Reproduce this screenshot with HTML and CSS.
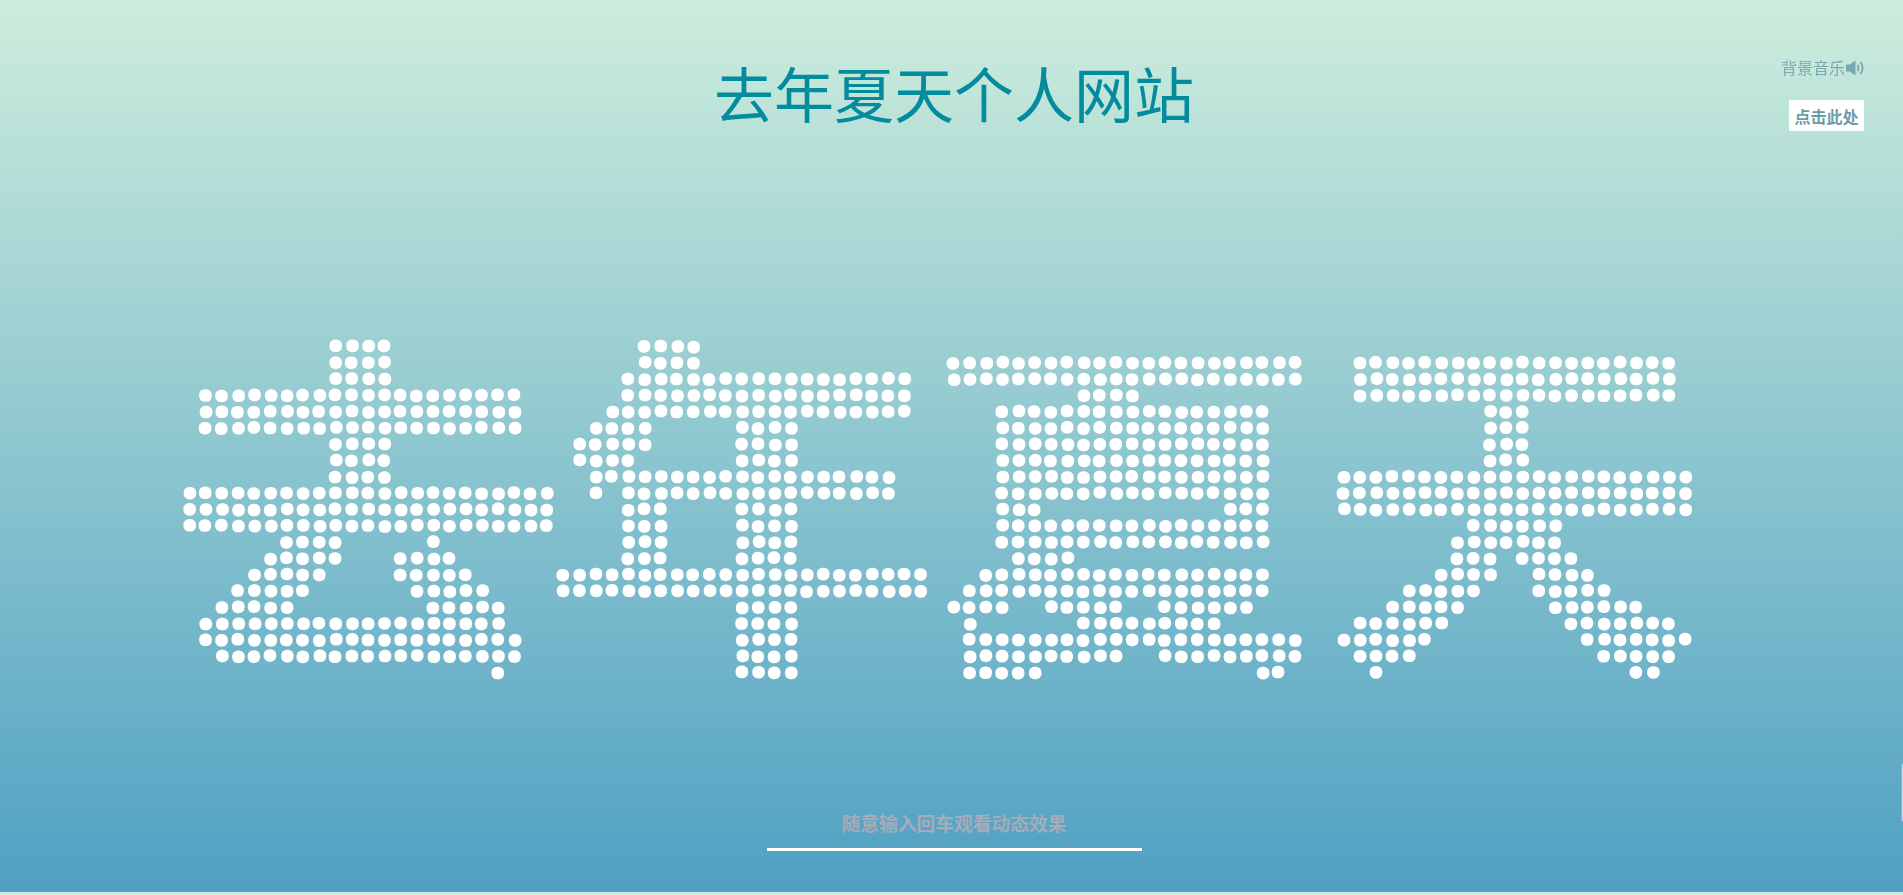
FILE: index.html
```html
<!DOCTYPE html>
<html lang="zh-CN">
<head>
    <meta charset="UTF-8">
    <title>去年夏天个人网站</title>
    <link rel="stylesheet" href="styles.css">
</head>
<body>
<canvas id="dots" width="1903" height="892"></canvas>
<div class="page">
    <h1 class="title">去年夏天个人网站</h1>
    <form class="entry">
        <input class="entry-input" type="text" placeholder="随意输入回车观看动态效果">
    </form>
</div>
<div class="music">
    <p class="music-label">背景音乐<svg class="music-icon" viewBox="0 0 18 16"><path d="M0 4.500h3.500L9.500 .5v15l-6-4H0z"/><path class="wave" d="M11.500 5c1.300 1.900 1.300 4.100 0 6"/><path class="wave" d="M14.300 2c2.900 3.700 2.900 8.300 0 12"/></svg></p>
    <button class="music-btn" type="button">点击此处</button>
</div>
<div class="side-tab"></div>
<script src="script.js"></script>
</body>
</html>
```

FILE: styles.css
```css
html{
    height:892px;
    background:linear-gradient(180deg,#cdeddc,#4fa0c3);
}
body{
    margin:0;
    height:892px;
    overflow:hidden;
    font-family:"Noto Sans CJK SC","Liberation Sans",sans-serif;
}
#dots{position:absolute;left:0;top:0;}
.page{
    display:flex;
    flex-direction:column;
    align-items:center;
    height:892px;
    padding-left:5px;
    box-sizing:border-box;
    width:1903px;
}
.title{
    margin:50px 0 0;
    font-size:60px;
    line-height:84px;
    font-weight:400;
    color:#038b9e;
}
.entry{margin-top:auto;margin-bottom:41px;}
.entry-input{
    display:block;
    width:375px;
    height:35px;
    padding:0 0 8px;
    border:0;
    border-bottom:3px solid #fff;
    background:transparent;
    outline:none;
    text-align:center;
    font:bold 18.75px "Noto Sans CJK SC","Liberation Sans",sans-serif;
}
.entry-input::placeholder{color:#a6acba;opacity:1;}
.music{
    position:absolute;
    top:56px;
    right:39px;
    display:flex;
    flex-direction:column;
    align-items:flex-end;
    gap:21px;
}
.music-label{
    display:flex;
    align-items:center;
    margin:0;
    font-size:16px;
    line-height:23px;
    color:#7ba9b0;
}
.music-icon{width:18px;height:16px;margin-left:1px;fill:#7ba9b0;}
.music-icon .wave{fill:none;stroke:#7ba9b0;stroke-width:1.8;}
.music-btn{
    width:75px;
    height:31px;
    padding:0;
    border:0;
    background:#fff;
    color:#6a9ca8;
    font:bold 16px "Noto Sans CJK SC","Liberation Sans",sans-serif;
}
.side-tab{
    position:absolute;
    top:763px;
    left:1901px;
    width:20px;
    height:59px;
    border:1px solid #8fb0c2;
    border-radius:2px;
    background:#c9dfe8;
    box-sizing:border-box;
}
```

FILE: script.js
```js
// 点阵文字：每行写成 [起始列,结束列,起始列,结束列...]
var rows=[
    [9,12,28,31],
    [9,12,28,31,47,68,72,91],
    [9,12,27,44,47,68,72,91],
    [1,20,27,44,55,58,72,91],
    [1,20,26,44,50,66,80,82],
    [1,20,25,28,34,37,50,66,80,82],
    [9,12,24,28,34,37,50,66,80,82],
    [9,12,24,27,34,37,50,66,80,82],
    [9,12,25,43,50,66,71,92],
    [0,22,25,25,27,43,50,66,71,92],
    [0,22,27,29,34,37,50,52,64,66,71,92],
    [0,22,27,29,34,37,50,66,79,84],
    [6,9,15,15,27,29,34,37,50,66,78,84],
    [5,9,13,16,27,29,34,37,51,54,78,80,82,85],
    [4,8,13,17,23,45,49,66,77,80,83,86],
    [3,7,14,18,23,45,48,66,75,79,83,87],
    [2,6,15,19,34,37,47,50,53,57,60,65,74,78,84,89],
    [1,19,34,37,48,48,55,63,72,77,85,91],
    [1,20,34,37,48,68,71,76,86,92],
    [2,20,34,37,48,57,60,68,72,75,87,91],
    [19,19,34,37,48,52,66,67,73,73,89,90]
];
var canvas=document.getElementById("dots");
var ctx=canvas.getContext("2d");
var stepX=16.26;
var stepY=16.3;
var size=12.6;

// 小范围抖动，粒子不是严格对齐的
function wobble(a,b) {
    var n=Math.sin(a*12.9898+b*78.233)*43758.5453;
    return (n-Math.floor(n)-0.5)*1.5;
}

ctx.fillStyle="#fff";
for (var r=0;r<rows.length;r++){
    var spans=rows[r];
    for (var s=0;s<spans.length;s+=2){
        for (var c=spans[s];c<=spans[s+1];c++){
            var x=189.3+c*stepX+wobble(c,r);
            var y=346.5+r*stepY+wobble(r+7,c+3);
            ctx.beginPath();
            ctx.roundRect(x-size/2,y-size/2,size,size,5.6);
            ctx.fill();
        }
    }
}
```
